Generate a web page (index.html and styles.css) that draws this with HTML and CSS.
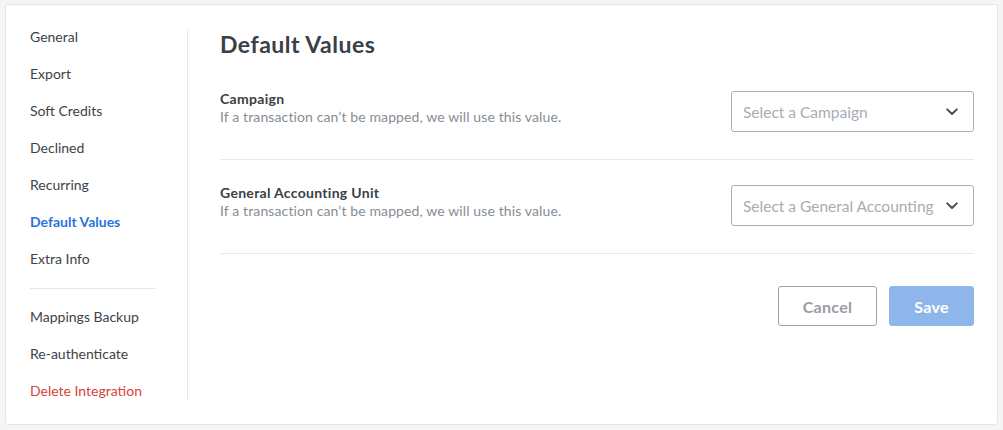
FILE: index.html
```html
<!DOCTYPE html>
<html lang="en">
<head>
<meta charset="utf-8">
<title>Default Values</title>
<link rel="stylesheet" href="styles.css">
</head>
<body>
<div class="card">
  <aside class="sidebar">
    <nav class="nav">
      <a class="nav-item">General</a>
      <a class="nav-item">Export</a>
      <a class="nav-item">Soft Credits</a>
      <a class="nav-item">Declined</a>
      <a class="nav-item">Recurring</a>
      <a class="nav-item active">Default Values</a>
      <a class="nav-item">Extra Info</a>
      <div class="nav-sep"></div>
      <a class="nav-item">Mappings Backup</a>
      <a class="nav-item">Re-authenticate</a>
      <a class="nav-item danger">Delete Integration</a>
    </nav>
  </aside>
  <main class="main">
    <h1 class="title">Default Values</h1>
    <div class="row">
      <div class="row-text">
        <div class="row-label">Campaign</div>
        <div class="row-desc">If a transaction can’t be mapped, we will use this value.</div>
      </div>
      <div class="select">
        <span class="select-text">Select a Campaign</span>
        <svg class="chevron" width="12" height="8" viewBox="0 0 12 8"><path d="M1.2 1.4 L6 6 L10.8 1.4" fill="none" stroke="#4a5057" stroke-width="2" stroke-linecap="round" stroke-linejoin="round"/></svg>
      </div>
    </div>
    <div class="row">
      <div class="row-text">
        <div class="row-label">General Accounting Unit</div>
        <div class="row-desc">If a transaction can’t be mapped, we will use this value.</div>
      </div>
      <div class="select">
        <span class="select-text">Select a General Accounting</span>
        <svg class="chevron" width="12" height="8" viewBox="0 0 12 8"><path d="M1.2 1.4 L6 6 L10.8 1.4" fill="none" stroke="#4a5057" stroke-width="2" stroke-linecap="round" stroke-linejoin="round"/></svg>
      </div>
    </div>
    <div class="actions">
      <button class="btn btn-cancel">Cancel</button>
      <button class="btn btn-save">Save</button>
    </div>
  </main>
</div>
</body>
</html>
```
FILE: styles.css
```css
* { box-sizing: border-box; }
html, body { margin: 0; padding: 0; }
body {
  background: #f4f5f7;
  font-family: Lato, "Liberation Sans", sans-serif;
  color: #3d4349;
  width: 1003px;
  height: 430px;
  padding: 4px 5px 5px 5px;
}
.card {
  background: #fff;
  border: 1px solid #e4e6e9;
  border-radius: 3px;
  height: 421px;
  display: flex;
  padding: 24px 23px 23px 0;
}
.sidebar {
  width: 182px;
  flex: none;
  border-right: 1px solid #e6e8eb;
  padding-left: 24px;
}
.nav {
  display: flex;
  flex-direction: column;
  gap: 17px;
  margin-top: -2px;
}
.nav-item {
  display: block;
  height: 20px;
  line-height: 20px;
  font-size: 14px;
  color: #3d4349;
  white-space: nowrap;
}
.nav-item.active { color: #2a73dc; font-weight: 700; }
.nav-item.danger { color: #d8433b; }
.nav-sep {
  width: 125px;
  height: 1px;
  background: #e4e6e9;
  margin: 2px 0 1px;
}
.main {
  flex: 1;
  padding-left: 32px;
}
.title {
  margin: 0;
  font-size: 23px;
  line-height: 31px;
  font-weight: 700;
  letter-spacing: 0.5px;
  color: #3a4046;
}
.row {
  display: flex;
  justify-content: space-between;
  align-items: flex-start;
  padding: 24px 0 27px;
  border-bottom: 1px solid #e6e8eb;
}
.row:first-of-type { padding-top: 30px; }
.row-label {
  font-size: 14px;
  line-height: 18px;
  font-weight: 700;
  letter-spacing: 0.3px;
  color: #3a4046;
}
.row-desc {
  font-size: 14px;
  line-height: 18px;
  letter-spacing: 0.12px;
  color: #868d95;
}
.select {
  margin-top: 1px;
  width: 243px;
  height: 41px;
  border: 1px solid #a9b0b7;
  border-radius: 3px;
  display: flex;
  align-items: center;
  justify-content: space-between;
  padding: 0 15px 0 11px;
}
.select-text {
  font-size: 15.5px;
  color: #a7adb4;
  white-space: nowrap;
  overflow: hidden;
}
.chevron { flex: none; }
.actions {
  display: flex;
  justify-content: flex-end;
  gap: 12px;
  margin-top: 32px;
}
.btn {
  height: 40px;
  border-radius: 3px;
  font-family: Lato, "Liberation Sans", sans-serif;
  font-size: 16px;
  font-weight: 700;
  letter-spacing: 0.3px;
  cursor: pointer;
}
.btn-cancel {
  width: 99px;
  background: #fff;
  border: 1px solid #9ea3a8;
  color: #9a9ea3;
}
.btn-save {
  width: 85px;
  background: #8fb6ea;
  border: 1px solid #8fb6ea;
  color: #fff;
}
```
